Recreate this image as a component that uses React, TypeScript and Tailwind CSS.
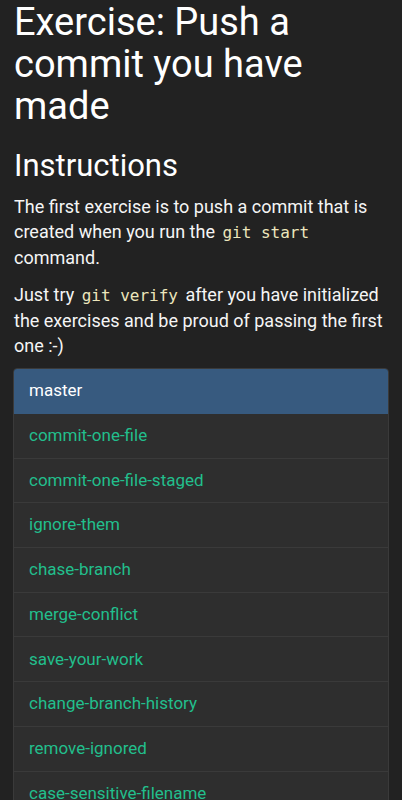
import React from 'react'

const branches = [
  'master',
  'commit-one-file',
  'commit-one-file-staged',
  'ignore-them',
  'chase-branch',
  'merge-conflict',
  'save-your-work',
  'change-branch-history',
  'remove-ignored',
  'case-sensitive-filename',
  'fix-typo',
  'forge-date',
]

const Code: React.FC<{ children: React.ReactNode }> = ({ children }) => (
  <code className="font-['DejaVu_Sans_Mono',monospace] text-[16px] text-[#ece6bc] px-[3px]">{children}</code>
)

const App: React.FC = () => {
  const active = 'master'

  return (
    <div className="min-h-screen bg-[#222222] text-white font-['Roboto',sans-serif] px-[14px] pt-px pb-6">
      {/* Header */}
      <h1 className="text-[38px] leading-[42px] font-normal">Exercise: Push a commit you have made</h1>
      <h2 className="text-[31px] leading-[34px] font-normal mt-[22px]">Instructions</h2>

      <p className="text-[18px] leading-[25px] mt-[11px] text-[#f5f5f5]">
        The first exercise is to push a commit that is created when you run the <Code>git start</Code> command.
      </p>
      <p className="text-[18px] leading-[25px] mt-[12px] text-[#f5f5f5]">
        Just try <Code>git verify</Code> after you have initialized the exercises and be proud of passing the first
        one :-)
      </p>

      {/* Branch list */}
      <div className="mt-[10px] -mx-px rounded-[4px] overflow-hidden border border-[#3a3a3a]">
        {branches.map(branch => (
          <div
            key={branch}
            className={
              branch === active
                ? 'flex items-center h-[45px] px-[15px] text-[17px] bg-[#375a7f] text-white border-b border-[#375a7f]'
                : 'flex items-center h-[44.7px] px-[15px] text-[17px] bg-[#2e2e2e] text-[#22bf8c] border-b border-[#3a3a3a]'
            }
          >
            {branch}
          </div>
        ))}
      </div>
    </div>
  )
}

export default App
